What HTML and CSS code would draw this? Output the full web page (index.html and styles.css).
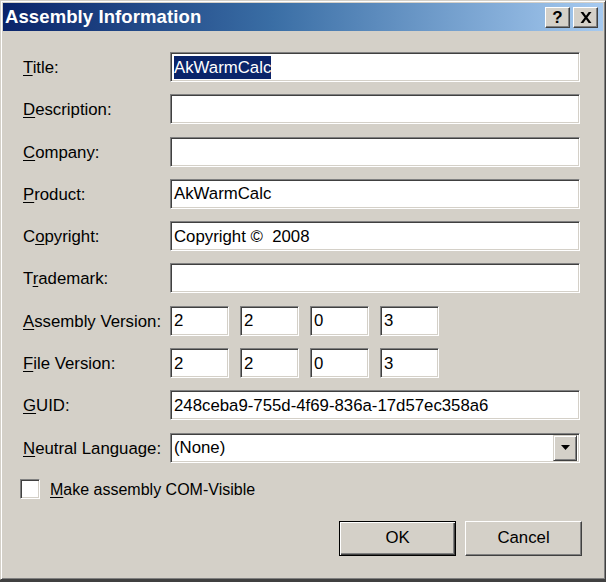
FILE: index.html
```html
<!DOCTYPE html>
<html>
<head>
<meta charset="utf-8">
<title>Assembly Information</title>
<link rel="stylesheet" href="styles.css">
</head>
<body>
<div class="window">
  <div class="titlebar">
    <span class="title">Assembly Information</span>
    <div class="tbtns">
      <div class="tbtn">?</div>
      <div class="tbtn tclose">
        <svg width="12" height="11" viewBox="0 0 12 11"><path d="M0.5 0h2.8L6 3.7 8.7 0h2.8L7.4 5.5 11.5 11H8.7L6 7.3 3.3 11H0.5l4.1-5.5z" fill="#000"/></svg>
      </div>
    </div>
  </div>
  <div class="content">
    <div class="form">
      <label class="lbl"><u>T</u>itle:</label>
      <div class="field"><span class="sel">AkWarmCalc</span></div>

      <label class="lbl"><u>D</u>escription:</label>
      <div class="field"></div>

      <label class="lbl"><u>C</u>ompany:</label>
      <div class="field"></div>

      <label class="lbl"><u>P</u>roduct:</label>
      <div class="field">AkWarmCalc</div>

      <label class="lbl">C<u>o</u>pyright:</label>
      <div class="field">Copyright ©&nbsp; 2008</div>

      <label class="lbl">T<u>r</u>ademark:</label>
      <div class="field"></div>

      <label class="lbl"><u>A</u>ssembly Version:</label>
      <div class="vers">
        <div class="field small">2</div>
        <div class="field small">2</div>
        <div class="field small">0</div>
        <div class="field small">3</div>
      </div>

      <label class="lbl"><u>F</u>ile Version:</label>
      <div class="vers">
        <div class="field small">2</div>
        <div class="field small">2</div>
        <div class="field small">0</div>
        <div class="field small">3</div>
      </div>

      <label class="lbl"><u>G</u>UID:</label>
      <div class="field">248ceba9-755d-4f69-836a-17d57ec358a6</div>

      <label class="lbl"><u>N</u>eutral Language:</label>
      <div class="field combo">
        <span class="ctext">(None)</span>
        <div class="dropbtn">
          <svg width="9" height="5" viewBox="0 0 9 5"><path d="M0 0h9L4.5 5z" fill="#000"/></svg>
        </div>
      </div>
    </div>

    <div class="checkrow">
      <div class="check"></div>
      <span class="clabel"><u>M</u>ake assembly COM-Visible</span>
    </div>

    <div class="buttons">
      <div class="btn default"><span>OK</span></div>
      <div class="btn">Cancel</div>
    </div>
  </div>
</div>
</body>
</html>
```

FILE: styles.css
```css
html, body {
  margin: 0;
  padding: 0;
  background: #404040;
}
body {
  width: 606px;
  height: 582px;
  overflow: hidden;
  font-family: "Liberation Sans", Arial, sans-serif;
  font-size: 16.8px;
  color: #000;
}
.window {
  box-sizing: border-box;
  width: 606px;
  height: 580px;
  background: #d4d0c8;
  border: 1px solid;
  border-color: #d4d0c8 #404040 #404040 #d4d0c8;
  box-shadow: inset 1px 1px #ffffff, inset -1px -1px #808080;
  padding: 2px;
  display: flex;
  flex-direction: column;
}
.titlebar {
  height: 28px;
  background: linear-gradient(to right, #0a246a 0%, #3a6ea5 45%, #a6caf0 100%);
  display: flex;
  align-items: center;
  justify-content: space-between;
  padding: 0 5px 0 2px;
}
.title {
  color: #fff;
  font-weight: bold;
  font-size: 18.5px;
  letter-spacing: 0.1px;
}
.tbtns {
  display: flex;
  gap: 3px;
  margin-top: 1px;
}
.tbtn {
  box-sizing: border-box;
  width: 25px;
  height: 21px;
  background: #d4d0c8;
  border: 1px solid;
  border-color: #fff #404040 #404040 #fff;
  box-shadow: inset -1px -1px #808080;
  display: flex;
  align-items: center;
  justify-content: center;
  font-weight: bold;
  font-size: 17px;
  line-height: 1;
}
.content {
  padding: 21px 21px 0 20px;
  display: flex;
  flex-direction: column;
}
.form {
  display: grid;
  grid-template-columns: 147px 410px;
  row-gap: 12.3px;
  align-items: center;
}
.lbl {
  white-space: nowrap;
  padding-top: 2px;
}
.lbl u, .clabel u {
  text-underline-offset: 2px;
}
.field {
  box-sizing: border-box;
  height: 30px;
  background: #fff;
  border: 1px solid;
  border-color: #808080 #fff #fff #808080;
  box-shadow: inset 1px 1px #404040, inset -1px -1px #d4d0c8;
  padding: 1px 3px 0;
  display: flex;
  align-items: center;
  white-space: pre;
}
.sel {
  background: #0a246a;
  color: #fff;
  padding: 2px 0 1px;
}
.vers {
  display: flex;
  gap: 11px;
}
.field.small {
  width: 59px;
  padding-left: 3px;
}
.combo {
  justify-content: space-between;
  padding: 2px 2px 2px 3px;
}
.dropbtn {
  box-sizing: border-box;
  width: 24px;
  height: 26px;
  background: #d4d0c8;
  border: 1px solid;
  border-color: #d4d0c8 #404040 #404040 #d4d0c8;
  box-shadow: inset 1px 1px #fff, inset -1px -1px #808080;
  display: flex;
  align-items: center;
  justify-content: center;
}
.checkrow {
  margin-top: 16px;
  margin-left: -3px;
  display: flex;
  align-items: center;
  gap: 10px;
  height: 21px;
}
.clabel {
  font-size: 16px;
  padding-top: 2px;
}
.check {
  box-sizing: border-box;
  width: 20px;
  height: 20px;
  background: #fff;
  border: 1px solid;
  border-color: #808080 #fff #fff #808080;
  box-shadow: inset 1px 1px #404040, inset -1px -1px #d4d0c8;
}
.buttons {
  margin-top: 21px;
  display: flex;
  justify-content: flex-end;
  gap: 9px;
}
.btn {
  box-sizing: border-box;
  width: 117px;
  height: 35px;
  background: #d4d0c8;
  border: 1px solid;
  border-color: #fff #404040 #404040 #fff;
  box-shadow: inset -1px -1px #808080;
  display: flex;
  align-items: center;
  justify-content: center;
}
.btn.default {
  border: 1px solid #000;
  box-shadow: inset 1px 1px #fff, inset -1px -1px #404040, inset -2px -2px #808080;
}
```
